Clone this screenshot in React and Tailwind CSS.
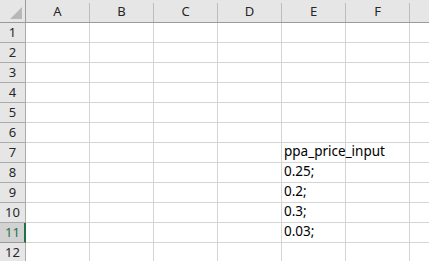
import React from 'react';

const cols = ['A', 'B', 'C', 'D', 'E', 'F', ''];

// values living in column E, keyed by row number
const data = {
  7: 'ppa_price_input',
  8: '0.25;',
  9: '0.2;',
  10: '0.3;',
  11: '0.03;',
};

const ColHeader = ({ label }) => (
  <div className="h-full pt-[3px]">
    <div className="flex h-full items-center justify-center border-r border-[#bdbdbd] pb-px text-[13px] text-[#262626]">
      {label}
    </div>
  </div>
);

const Row = ({ n }) => {
  const active = n === 11;
  return (
    <>
      <div
        className={`flex items-center justify-center border-b border-r text-[13px] ${
          active
            ? 'border-b-[#9b9b9b] border-r-[#217346] border-r-2 bg-[#d2d2d2] text-[#217346]'
            : 'border-[#ababab] bg-[#e6e6e6] text-[#262626]'
        }`}
      >
        <span className={active ? 'pl-[1px]' : ''}>{n}</span>
      </div>
      {cols.map((c, i) => (
        <div
          key={i}
          className="flex items-end overflow-visible whitespace-nowrap border-b border-r border-[#d4d4d4] pb-[1px] pl-[2px] text-[13.5px] text-black"
        >
          {c === 'E' && data[n]}
        </div>
      ))}
    </>
  );
};

export default function App() {
  const rows = Array.from({ length: 12 }, (_, i) => i + 1);
  return (
    <div
      className="h-[261px] w-[429px] overflow-hidden bg-white"
      style={{ fontFamily: '"Noto Sans", "Open Sans", sans-serif' }}
    >
      <div className="grid grid-cols-[26px_64px_64px_64px_64px_64px_64px_20px] grid-rows-[23px_repeat(12,20px)]">
        {/* corner */}
        <div className="flex items-end justify-end border-b border-r border-[#9b9b9b] bg-[#e6e6e6] pb-[3px] pr-[3px]">
          <svg width="12" height="12" viewBox="0 0 12 12">
            <polygon points="12,0 12,12 0,12" fill="#b7b7b7" />
          </svg>
        </div>
        {cols.map((c, i) => (
          <div key={i} className="border-b border-[#9b9b9b] bg-[#e6e6e6]">
            <ColHeader label={c} />
          </div>
        ))}
        {rows.map((n) => (
          <Row key={n} n={n} />
        ))}
      </div>
    </div>
  );
}
